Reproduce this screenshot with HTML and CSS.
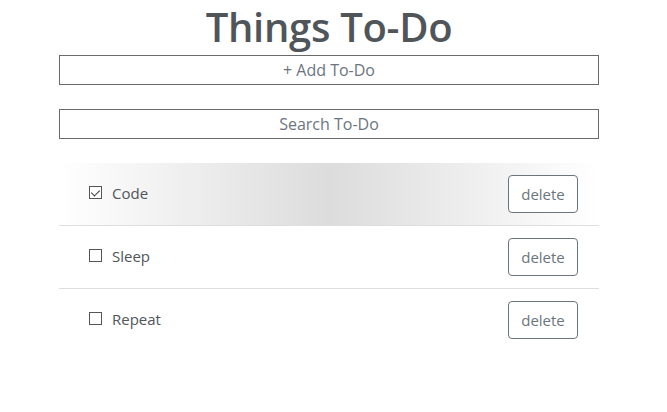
FILE: index.html
```html
<!DOCTYPE html>
<html lang="en">
<head>
<meta charset="utf-8">
<title>Things To-Do</title>
<link rel="stylesheet" href="styles.css">
</head>
<body>
<div class="app">
  <h1 class="title">Things To-Do</h1>
  <input class="field" type="text" placeholder="+ Add To-Do">
  <input class="field search" type="text" placeholder="Search To-Do">
  <ul class="list">
    <li class="item hovered">
      <label class="item-label"><input class="check" type="checkbox" checked><span>Code</span></label>
      <button class="del">delete</button>
    </li>
    <li class="item">
      <label class="item-label"><input class="check" type="checkbox"><span>Sleep</span></label>
      <button class="del">delete</button>
    </li>
    <li class="item last">
      <label class="item-label"><input class="check" type="checkbox"><span>Repeat</span></label>
      <button class="del">delete</button>
    </li>
  </ul>
</div>
</body>
</html>
```

FILE: styles.css
```css
* { box-sizing: border-box; }
body {
  margin: 0;
  background: #fff;
  font-family: "Open Sans", "Noto Sans", sans-serif;
  color: #50555a;
}
.app {
  width: 540px;
  margin-left: 59px;
  display: flex;
  flex-direction: column;
}
.title {
  margin: 0 0 2px;
  font-size: 40px;
  line-height: 53px;
  font-weight: 600;
  text-align: center;
  color: #50555a;
  letter-spacing: -0.3px;
}
.field {
  width: 540px;
  height: 30px;
  border: 1px solid #6a6a6a;
  border-radius: 0;
  padding: 0 8px;
  font-family: inherit;
  font-size: 16px;
  text-align: center;
  color: #50555a;
  outline: none;
}
.field::placeholder { color: #6c757d; }
.search { margin-top: 24px; }
.list {
  list-style: none;
  margin: 24px 0 0;
  padding: 0;
}
.item {
  display: flex;
  align-items: center;
  justify-content: space-between;
  padding: 12px 21px 12px 30px;
  border-bottom: 1px solid #dedede;
}
.item.last { border-bottom: none; }
.item.hovered {
  background: linear-gradient(to right, #ffffff 0%, #dcdcdc 50%, #ffffff 100%);
}
.item-label {
  display: flex;
  align-items: center;
  gap: 10px;
  padding-bottom: 3px;
  font-size: 15px;
  color: #50555a;
}
.check {
  appearance: none;
  -webkit-appearance: none;
  margin: 0;
  width: 13px;
  height: 13px;
  border: 1px solid #555;
  background: #fff;
  position: relative;
}
.check:checked::after {
  content: "";
  position: absolute;
  left: 3px;
  top: 1px;
  width: 4px;
  height: 7px;
  border: solid #333;
  border-width: 0 1.5px 1.5px 0;
  transform: rotate(45deg);
}
.del {
  width: 70px;
  height: 38px;
  border: 1px solid #6c757d;
  border-radius: 4px;
  background: #fff;
  color: #6c757d;
  font-family: inherit;
  font-size: 15px;
  padding: 0;
}
```
